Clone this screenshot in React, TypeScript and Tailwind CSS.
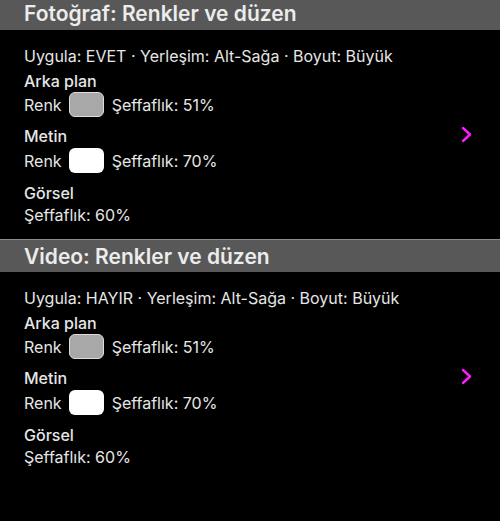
const sections = [
  {
    title: 'Fotoğraf: Renkler ve düzen',
    summary: 'Uygula: EVET · Yerleşim: Alt-Sağa · Boyut: Büyük',
    bgOpacity: 51,
    textOpacity: 70,
    imageOpacity: 60,
  },
  {
    title: 'Video: Renkler ve düzen',
    summary: 'Uygula: HAYIR · Yerleşim: Alt-Sağa · Boyut: Büyük',
    bgOpacity: 51,
    textOpacity: 70,
    imageOpacity: 60,
  },
]

function Chevron() {
  return (
    <svg width="11" height="17" viewBox="0 0 11 17" fill="none" className="shrink-0">
      <polyline points="2,2 9,8.5 2,15" stroke="#ff1aff" strokeWidth="2.4" strokeLinecap="round" strokeLinejoin="round" />
    </svg>
  )
}

function ColorRow({ fill, opacity }: { fill: 'gray' | 'white'; opacity: number }) {
  return (
    <div className="flex items-center h-[25px]">
      <span>Renk</span>
      <span
        className={
          fill === 'gray'
            ? 'ml-[7px] w-[35px] h-[25px] rounded-[6px] bg-[#a8a8a8] border border-[#dcdcdc]'
            : 'ml-[7px] w-[35px] h-[25px] rounded-[6px] bg-white'
        }
      />
      <span className="ml-[8px]">Şeffaflık: {opacity}%</span>
    </div>
  )
}

function Section({ s, first }: { s: (typeof sections)[number]; first: boolean }) {
  return (
    <div>
      <div
        className={
          first
            ? 'h-[33px] bg-[#585858] pl-[24px] flex items-center text-[21px] font-semibold text-[#ececec] leading-none'
            : 'h-[33px] bg-[#585858] border-t border-[#8c8c8c] pl-[24px] flex items-center text-[21px] font-semibold text-[#ececec] leading-none'
        }
      >
        {s.title}
      </div>
      <div className="flex items-center pr-[28px]">
        <div className="flex-1 pl-[24px] pt-[14px] pb-[12px] text-[16px] text-[#e6e6e6]">
          <div className="leading-[24px]">{s.summary}</div>
          <div className="leading-[22px] mt-[2px] font-medium">Arka plan</div>
          <ColorRow fill="gray" opacity={s.bgOpacity} />
          <div className="leading-[22px] mt-[8px] font-medium">Metin</div>
          <div className="mt-[1px]">
            <ColorRow fill="white" opacity={s.textOpacity} />
          </div>
          <div className="leading-[22px] mt-[9px] font-medium">Görsel</div>
          <div className="leading-[23px]">Şeffaflık: {s.imageOpacity}%</div>
        </div>
        <Chevron />
      </div>
    </div>
  )
}

export default function App() {
  return (
    <div
      className="w-[500px] h-[521px] overflow-hidden bg-black"
      style={{ fontFamily: 'Inter, "Noto Sans", sans-serif' }}
    >
      <div className="-mt-[3px]">
        {sections.map((s, i) => (
          <Section key={s.title} s={s} first={i === 0} />
        ))}
      </div>
    </div>
  )
}
